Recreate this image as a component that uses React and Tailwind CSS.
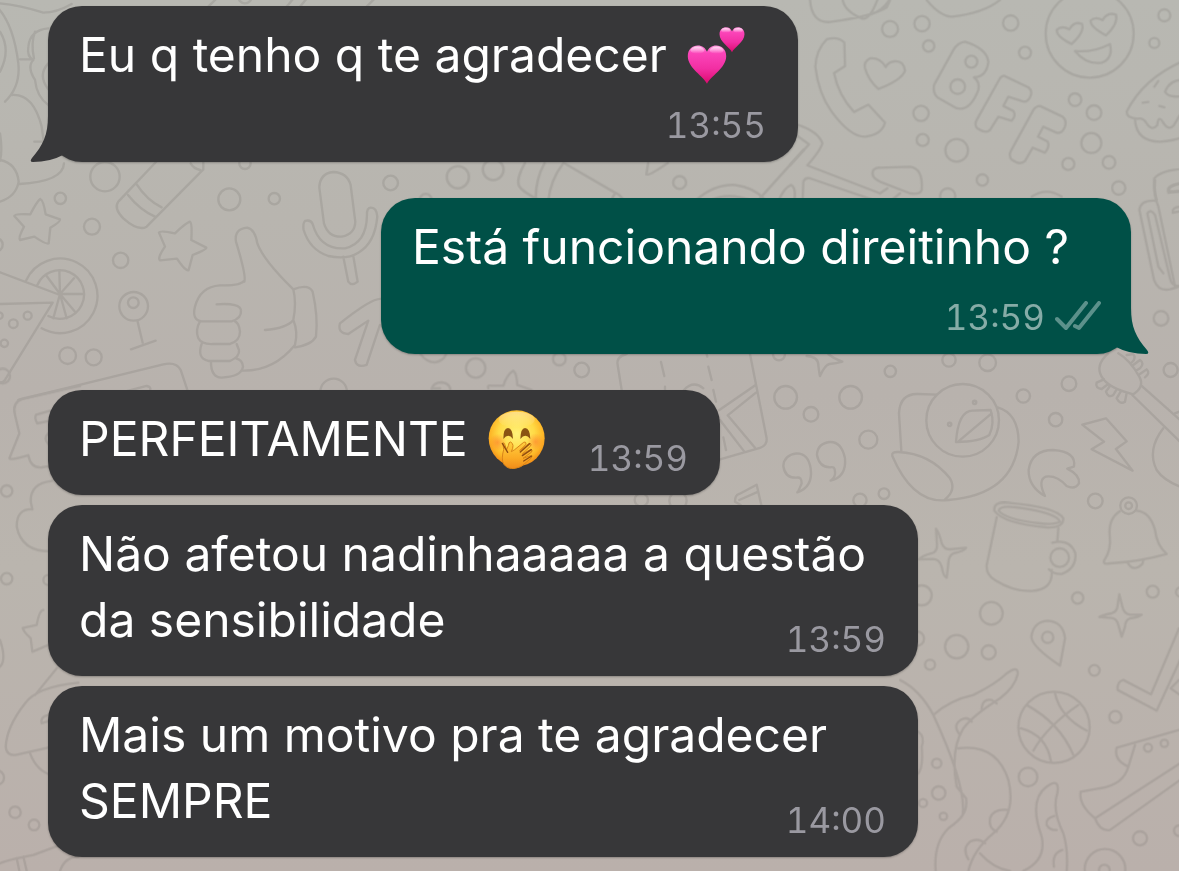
import clsx from 'clsx';

const messages = [
  { id: 1, text: ['Eu q tenho q te agradecer'], emoji: 'hearts', time: '13:55', tail: true, stacked: true, width: 'w-[750px]' },
  { id: 2, text: ['Está funcionando direitinho ?'], time: '13:59', mine: true, tail: true, stacked: true, width: 'w-[750px]' },
  { id: 3, text: ['PERFEITAMENTE'], emoji: 'giggle', time: '13:59', width: 'w-[672px]' },
  { id: 4, text: ['Não afetou nadinhaaaaa a questão', 'da sensibilidade'], time: '13:59', width: 'w-[870px]' },
  { id: 5, text: ['Mais um motivo pra te agradecer', 'SEMPRE'], time: '14:00', width: 'w-[870px]' },
];

// Each wallpaper tile is drawn at about three times its final size.
const tiles = [
  {
    at: 'translate(0 0) scale(0.3333)',
    circles: [[315, 530, 44], [735, -10, 20]],
    paths: [
      'M0 10Q60 15 130 38Q170 38 215 12',
      'M-10 20Q40 70 55 190Q62 260 15 305M0 95Q34 150 0 215',
      'M145 85Q90 90 85 140Q80 170 100 180Q80 200 105 240Q110 290 145 315M105 95Q92 130 102 175M60 178H98M145 190Q112 225 145 268',
      'M35 285Q100 280 125 380L132 430M103 425H130M0 400Q8 450 0 482',
      'M0 480Q50 490 56 545Q48 590 0 605M58 552Q190 545 192 490',
      'M625 20L655-10M860 20L885-10M900 20L925-10M1100 20L1130-10',
    ],
  },
  {
    at: 'translate(790 0) scale(0.3333)',
    circles: [
      [300, 87, 24], [396, 71, 23], [416, 138, 17], [662, 69, 23], [705, 158, 18], [1123, 46, 18], [1093, 129, 15],
      [393, 340, 23], [398, 420, 18], [500, 451, 34], [577, 540, 17], [473, 588, 23], [855, 299, 19], [912, 338, 22],
      [904, 429, 30], [835, 492, 18], [957, 487, 19], [899, 101, 132], [544, 185, 18], [503, 260, 22],
    ],
    paths: [
      'M60 0Q65 70 120 66Q250 48 290 22L300 0M158 0Q165 35 218 56Q240 58 262 0M240 44Q275 35 298 0',
      'M410 0Q450 48 485 50Q580 40 630 0',
      'M163 128Q145 108 110 118Q78 150 76 200Q85 280 125 335Q180 410 225 410Q275 405 285 368L235 314L192 336Q145 285 132 219L165 198Z',
      'M287 201Q270 172 240 175Q220 185 225 205Q235 240 265 267Q335 240 345 212Q340 180 312 184Q295 186 287 201Z',
      'M525 125Q502 128 490 150L432 255Q428 280 442 292L500 325Q540 335 565 270Q570 245 552 232Q590 230 595 185Q590 145 525 125Z',
      'M642 227L715 262Q730 275 720 292Q710 310 695 303L655 290L640 318L670 333Q680 345 665 362L625 350L600 390Q588 402 562 385Q552 375 560 360L628 238Q633 228 642 227Z',
      'M750 318L818 350Q832 362 824 382Q815 402 800 398L760 380L744 410L773 425Q780 440 765 458L728 443L705 483Q690 497 665 479Q655 468 663 452L730 330Q738 318 750 318Z',
      'M845 132Q800 110 800 90Q815 75 838 88Q852 62 876 72Q885 95 845 132ZM948 106Q900 80 902 62Q915 48 938 60Q952 35 978 44Q985 72 948 106Z',
      'M855 153Q910 158 960 132Q970 175 935 188Q890 195 855 153Z',
      'M1180 183Q1060 235 1010 335Q1010 355 1042 356Q1060 352 1070 370Q1085 395 1102 375Q1105 345 1118 365Q1135 395 1152 375L1170 345M1035 360Q1040 425 1110 425Q1150 423 1180 410M1180 240Q1140 238 1125 275Q1135 295 1180 288M1105 243L1093 260M1058 308L1075 306M1108 318L1123 322',
      'M25 375Q85 395 97 430Q92 450 52 496L270 580M0 495L57 433L25 410M38 595L40 545Q45 532 60 535L250 600',
      'M270 503L360 500Q400 505 395 570Q390 585 360 580L270 545Q240 530 250 510Q258 502 270 503ZM270 580L292 565M305 600L330 580',
      'M725 590Q770 560 815 590',
      'M1180 507Q1115 510 1093 535Q1090 570 1100 600M1180 550Q1130 555 1135 570Q1145 580 1180 572',
    ],
  },
  {
    at: 'translate(0 150) scale(0.3333)',
    circles: [
      [181, 145, 17], [276, 230, 24], [362, 331, 23], [688, 148, 33], [823, 146, 17], [203, 617, 25], [281, 622, 24],
      [401, 469, 43], [400, 458, 16], [83, 497, 12], [40, 521, 13], [13, 580, 11], [-2, 497, 10], [735, 40, 17],
      [1001, 726, 40], [1172, 99, 22], [-12, 284, 20],
    ],
    paths: [
      'M121 147Q130 150 137 193L180 208Q182 215 151 233L146 280Q140 285 103 260L60 270Q54 264 72 230L43 198Q44 190 91 193Q110 155 121 147Z',
      'M570 215Q577 220 574 270L619 293Q620 299 578 315L566 360Q558 366 531 326L480 331Q471 325 495 290L477 248Q480 240 525 250Q556 220 570 215Z',
      'M468 36L355 155Q340 175 370 205Q415 245 440 230L610 58V36M408 100Q440 150 485 172M384 135Q420 180 465 200M572 40Q580 55 600 60',
      'M78 392A112 112 0 1 1 125 535M112 405A73 73 0 1 1 145 498M180 432L140 378M180 432L178 362M180 432L222 385M180 432L252 432M180 432L225 485M180 432L200 505M180 432L160 505M0 367L180 435M0 462L158 458L15 690Q8 700 0 697',
      'M413 515L428 578M393 598L467 572',
      'M733 395Q740 380 708 275Q702 237 742 233Q765 238 772 280Q790 330 880 418Q890 460 880 510Q860 535 795 540M880 510Q895 545 885 585Q820 665 725 662M733 392Q722 408 660 406Q600 410 585 470Q575 510 605 514H695Q725 505 723 482Q722 458 650 463',
      'M600 514Q585 540 595 565Q605 584 640 582H690Q720 572 720 545Q718 520 705 514M605 582Q590 625 625 633H690Q720 620 717 600L710 582M633 633Q632 682 665 683Q725 680 729 650Q728 630 708 625',
      'M880 418Q925 400 938 425Q955 500 948 560Q935 585 885 592',
      'M1000 66Q960 70 958 112L972 220Q985 262 1025 260Q1065 252 1066 215L1052 105Q1042 68 1000 66ZM938 222Q932 208 915 213Q908 220 911 240Q930 300 985 318Q1040 330 1075 308Q1125 280 1132 200Q1130 172 1112 173Q1100 175 1101 195Q1100 280 1035 295Q960 300 938 222ZM1030 320L1045 395Q1055 410 1073 395L1060 318',
      'M1145 447Q1120 440 1020 520Q1012 550 1045 552L1105 512L1065 630Q1070 655 1100 645L1140 525',
      'M55 750L490 643Q530 635 542 660L562 720M280 750L440 708Q455 710 450 722',
    ],
  },
  {
    at: 'translate(400 150) scale(0.3571)',
    circles: [[162, 76, 31], [261, 55, 29], [783, 91, 18], [72, 140, 17]],
    paths: [
      'M350 36Q325 80 333 100Q340 115 385 138M405 36Q380 80 380 135M458 36Q420 85 415 145M462 38L600 118Q620 125 628 145M595 145Q592 130 605 120',
      'M695 36L690 68Q695 75 750 36M830 140Q880 95 940 98Q990 105 1018 135M865 143Q920 115 985 143M1008 135L1130 0M1060 143Q1075 105 1095 98Q1110 105 1104 145',
    ],
  },
  {
    at: 'translate(330 345) scale(0.3333)',
    circles: [[437, 69, 29], [688, 42, 19]],
    paths: [
      'M272 28Q290 52 315 52Q340 48 348 28',
      'M305 132Q310 112 335 112Q362 115 362 140M305 130H330',
      'M475 130Q470 120 485 122H520Q530 90 550 77Q560 85 562 120L605 135',
    ],
  },
  {
    at: 'translate(900 180) scale(0.3333)',
    circles: [[656, 24, 20], [783, 415, 22]],
    paths: [
      'M765 62Q722 60 718 90L762 300Q775 335 810 328Q835 320 840 318M840 318Q815 320 810 295L765 105Q752 85 742 100L775 260L790 280M765 0Q760 45 775 80L825 320M840 10Q800 20 805 38L840 32M840 80Q815 82 818 98L840 94',
    ],
  },
  {
    at: 'translate(580 340) scale(0.3333)',
    circles: [
      [617, 172, 34], [812, 172, 34], [693, 223, 22], [865, 299, 27], [931, 94, 17], [597, 43, 18], [840, 481, 20],
      [912, 461, 16], [5, 90, 22], [184, 480, 20], [294, 482, 26],
    ],
    paths: [
      'M140 42Q108 50 113 75L125 150M510 42L560 295Q562 315 540 324L420 358M418 210L527 135M528 158L443 226L525 323M420 240L493 335M243 66L253 108M380 42L382 50M385 80L395 120M400 150L408 185M430 292L438 330M255 140V150M312 150Q340 120 370 145',
      'M680 48Q715 50 715 75Q718 100 720 108Q735 75 748 72Q770 70 787 65Q760 55 745 42',
      'M665 430Q655 455 652 457Q700 440 692 385Q685 340 650 340Q612 345 610 378Q615 415 650 413Q665 410 665 430Z',
      'M765 395Q768 410 752 422Q800 410 795 355Q785 305 750 306Q712 310 711 345Q718 382 750 382Q765 378 765 395Z',
      'M482 495L465 485Q465 465 478 462L530 434L544 495M478 480L535 455',
    ],
  },
  {
    at: 'translate(700 350) scale(0.3333)',
    circles: [
      [747, 30, 20], [863, 38, 25], [970, 138, 20], [1107, 101, 22], [1067, 209, 20], [1186, 453, 22], [1412, 60, 21],
      [788, 211, 109], [749, 223, 5], [824, 157, 5], [1286, 467, 25], [1286, 467, 10],
    ],
    paths: [
      'M710 134L655 132Q600 130 597 190L604 302M893 172Q955 190 956 275Q940 435 745 450Q640 465 577 318Q574 305 595 306Q690 310 750 385Q770 420 735 448',
      'M768 276Q775 180 820 182L872 180Q885 220 868 255Q840 275 768 276ZM778 272L875 190',
      'M1035 438Q985 410 986 360Q995 300 1060 300Q1130 305 1122 350L1102 356Q1140 375 1137 400Q1125 420 1100 408Q1070 375 1038 380Q1012 390 1035 438Z',
      'M1147 224L1218 205L1280 274L1248 297L1298 362L1175 298L1212 275Z',
      'M1225 10Q1185 45 1205 80Q1225 115 1300 133Q1335 110 1318 80Q1290 30 1255 10M1325 108L1440 210M1297 135L1440 275M1212 88L1190 98Q1185 115 1205 117L1225 102M1230 108L1218 125Q1225 145 1240 135L1250 118M1262 125L1250 145Q1260 165 1275 155L1280 130M1280 15L1300 12Q1310 25 1295 38M1300 45L1320 30Q1335 40 1320 55L1308 62M1320 72L1340 58Q1352 70 1335 82',
      'M1390 235Q1340 300 1370 360Q1390 390 1440 410M1425 190L1440 184',
    ],
  },
  {
    at: 'translate(900 480) scale(0.3333)',
    circles: [
      [533, 354, 17], [758, 335, 18], [274, 400, 34], [170, 500, 35], [266, 517, 21], [90, 554, 15],
      [65, 346, 30], [50, 476, 22], [443, 472, 17], [583, 571, 16], [646, 711, 18], [462, 742, 107], [384, 891, 28],
      [479, 233, 28], [110, 850, 14], [116, 939, 20], [69, 969, 12], [130, 1009, 11], [744, 803, 12], [793, 790, 11],
      [720, 1075, 21], [615, 1168, 61], [613, 1170, 16], [838, 1052, 16], [842, 336, 14],
    ],
    paths: [
      'M283 92Q280 65 320 68Q470 80 490 115Q490 145 440 142Q310 130 283 92ZM296 92Q300 75 350 82Q470 98 480 125Q465 135 420 130Q315 118 296 92ZM290 112L260 255Q258 285 285 300Q340 335 395 333Q460 330 455 270M475 145L472 182M457 188Q510 175 526 220Q530 265 485 282Q460 283 447 268',
      'M108 146Q118 160 125 190Q132 208 150 208L198 203Q195 212 160 220Q145 228 145 250L140 293Q130 290 125 260Q118 238 100 237L57 238Q65 228 95 220Q112 215 111 195Z',
      'M658 343L667 380Q672 402 690 404L725 404Q715 412 690 415Q676 420 675 440L665 470L655 435Q650 415 635 414L598 411Q610 405 635 400Q652 395 653 375Z',
      'M660 93Q625 115 629 165Q635 210 612 242Q610 255 630 250Q720 245 800 222Q770 195 765 150Q750 95 710 92M683 248Q700 278 727 252L730 240',
      'M480 557Q395 500 394 470Q400 425 443 422Q490 425 495 475Z',
      'M837 445L753 643L670 600Q650 605 653 630L770 692L840 540M837 600L812 625L840 645',
      'M380 675Q480 730 520 825M465 640Q480 710 560 752M535 675Q440 740 400 812M362 745Q440 765 453 845',
      'M0 600Q60 630 100 705Q200 920 188 1005Q180 1020 145 1045Q100 1090 107 1173M100 705Q150 660 220 645Q290 610 320 580Q355 555 353 582Q345 620 300 655Q220 705 190 745Q150 810 170 920L198 955Q202 985 188 1005M175 805Q290 790 325 900Q350 1000 280 1060Q220 1110 205 1173M240 1120Q280 1165 330 1173M370 1173Q440 1140 425 1070Q385 960 440 920Q480 890 472 940Q455 990 490 1060Q505 1110 500 1173',
      'M245 690Q245 655 275 660L290 670M180 765Q155 735 185 718Q205 710 215 725M325 990Q280 985 270 1015Q265 1045 290 1055M205 1138Q185 1105 210 1085Q235 1072 255 1090M463 1008Q435 1015 440 1035Q450 1052 470 1050M487 1110Q455 1120 462 1160M55 755Q75 770 65 800Q70 860 55 880',
      'M837 750L650 803Q640 840 685 860L705 795M685 860Q670 915 600 925L542 935Q535 975 585 1015L840 850M585 1015Q600 1055 630 1050L840 900',
    ],
  },
  {
    at: 'translate(0 380) scale(0.3333)',
    circles: [[20, 333, 17], [20, 596, 17], [45, 1297, 17], [102, 1335, 16], [145, 600, 15], [-10, 1193, 22], [8, -12, 22]],
    paths: [
      'M240 18L65 57Q35 70 45 105L58 160L28 235Q30 242 85 226Q92 265 125 262L150 258M150 92L108 104Q102 115 112 130L150 122M145 160Q128 175 145 192',
      'M155 303Q90 310 92 365L97 388Q50 385 50 440Q65 515 150 514',
      'M130 690Q118 690 110 735L68 744Q70 755 92 775L97 815L145 795',
      'M170 865L105 945M235 908Q110 920 75 970Q20 1040 17 1100Q20 1130 50 1124L150 1102M90 1120Q110 1175 160 1188M145 1005Q120 1010 125 1030L150 1022M0 780Q20 840 0 860',
      'M0 1450Q20 1440 100 1425L180 1395M50 1435L58 1473M70 1430L80 1473M180 1473Q195 1430 235 1430',
    ],
  },
];

function Wallpaper() {
  return (
    <svg
      className="absolute inset-0 -z-10 h-full w-full"
      viewBox="0 0 1179 871"
      preserveAspectRatio="xMidYMin slice"
      fill="none"
      stroke="#76726e"
      strokeWidth="7"
      strokeLinecap="round"
      strokeLinejoin="round"
      aria-hidden="true"
    >
      <g opacity="0.22">
        {tiles.map((tile) => (
          <g key={tile.at} transform={tile.at}>
            {tile.circles.map(([cx, cy, r]) => (
              <circle key={`${cx},${cy},${r}`} cx={cx} cy={cy} r={r} />
            ))}
            {tile.paths.map((d) => (
              <path key={d} d={d} />
            ))}
          </g>
        ))}
      </g>
    </svg>
  );
}

const heart =
  'M50 97C42 78 2 58 2 28C2 10 14 1 27 1C38 1 46 7 50 17C54 7 62 1 73 1C86 1 98 10 98 28C98 58 58 78 50 97Z';

function HeartsEmoji() {
  return (
    <svg className="ml-[6px] inline-block h-[60px] w-[60px] align-[-13px]" viewBox="0 0 60 60" role="img" aria-label="💕">
      <defs>
        <linearGradient id="heartFill" x1="0" y1="0" x2="0" y2="1">
          <stop offset="0" stopColor="#ff8edb" />
          <stop offset="0.2" stopColor="#fb45b9" />
          <stop offset="0.6" stopColor="#f22fa3" />
          <stop offset="1" stopColor="#dd0a6e" />
        </linearGradient>
        <linearGradient id="heartShine" x1="0" y1="0" x2="0" y2="1">
          <stop offset="0" stopColor="#fff" stopOpacity="0.7" />
          <stop offset="1" stopColor="#fff" stopOpacity="0" />
        </linearGradient>
      </defs>
      <g transform="translate(1 20) scale(0.4)">
        <path d={heart} fill="url(#heartFill)" />
        <ellipse cx="26" cy="13" rx="17" ry="9" fill="url(#heartShine)" />
        <ellipse cx="74" cy="13" rx="17" ry="9" fill="url(#heartShine)" />
      </g>
      <g transform="translate(33 2) scale(0.26)">
        <path d={heart} fill="url(#heartFill)" />
        <ellipse cx="26" cy="13" rx="17" ry="9" fill="url(#heartShine)" />
        <ellipse cx="74" cy="13" rx="17" ry="9" fill="url(#heartShine)" />
      </g>
    </svg>
  );
}

function GiggleEmoji() {
  return (
    <svg className="ml-[6px] inline-block h-[60px] w-[60px] align-[-13px]" viewBox="0 0 180 180" role="img" aria-label="🤭">
      <defs>
        <radialGradient id="face" cx="0.5" cy="0.42" r="0.58">
          <stop offset="0" stopColor="#fff27a" />
          <stop offset="0.55" stopColor="#ffda45" />
          <stop offset="0.82" stopColor="#fdb526" />
          <stop offset="1" stopColor="#f08a17" />
        </radialGradient>
        <radialGradient id="blush">
          <stop offset="0" stopColor="#ff6a2b" stopOpacity="0.5" />
          <stop offset="1" stopColor="#ff6a2b" stopOpacity="0" />
        </radialGradient>
        <linearGradient id="faceShine" x1="0" y1="0" x2="0" y2="1">
          <stop offset="0" stopColor="#fff" stopOpacity="0.4" />
          <stop offset="1" stopColor="#fff" stopOpacity="0" />
        </linearGradient>
        <linearGradient id="hand" x1="0" y1="0" x2="0" y2="1">
          <stop offset="0" stopColor="#ffcf40" />
          <stop offset="0.6" stopColor="#fbab25" />
          <stop offset="1" stopColor="#f08c1a" />
        </linearGradient>
      </defs>
      <circle cx="89" cy="88" r="84" fill="url(#face)" />
      <ellipse cx="89" cy="32" rx="54" ry="24" fill="url(#faceShine)" />
      <circle cx="32" cy="100" r="26" fill="url(#blush)" />
      <circle cx="146" cy="98" r="26" fill="url(#blush)" />
      <path d="M49 90Q49 57 63 57Q77 58 78 90Q64 70 49 90Z" fill="#8a5413" />
      <path d="M100 90Q101 57 114 57Q129 58 130 90Q115 70 100 90Z" fill="#8a5413" />
      <path
        d="M52 103Q46 95 50 122Q42 150 50 165Q62 182 85 178Q105 174 113 164L132 148Q137 143 131 140L108 148L133 130Q139 123 131 121L106 135L130 112Q136 103 126 103L98 125L116 107Q119 97 110 100L83 122L73 128Q84 106 71 99Q65 98 64 110L59 122Z"
        fill="url(#hand)"
        stroke="#d98418"
        strokeWidth="3"
        strokeLinejoin="round"
      />
      <path
        d="M46 103L62 130M133 122L106 140M134 141L110 156M128 104L100 129"
        fill="none"
        stroke="#8f4c10"
        strokeWidth="4"
        strokeLinecap="round"
      />
    </svg>
  );
}

function Tail({ mine }) {
  return (
    <svg
      className={clsx(
        'absolute bottom-0 h-[50px] w-[40px]',
        mine ? '-right-[18px] -scale-x-100 fill-[#005047]' : '-left-[18px] fill-[#373739]',
      )}
      viewBox="0 0 40 50"
      aria-hidden="true"
    >
      <path d="M18 4C18 23 13 33 2 46Q-1 50 3 50Q20 50 33 43L40 38V4Z" />
    </svg>
  );
}

function Ticks() {
  return (
    <svg
      className="h-8 w-[46px]"
      viewBox="0 0 46 32"
      fill="none"
      stroke="#5c918b"
      strokeWidth="4"
      strokeLinecap="round"
      strokeLinejoin="round"
      role="img"
      aria-label="Entregue"
    >
      <path d="M2 18L11 27L31 2" />
      <path d="M20 25L24 27L44 2" />
    </svg>
  );
}

function Message({ message }) {
  const { text, emoji, time, mine, tail, stacked, width } = message;

  return (
    <li
      className={clsx(
        'relative max-w-full rounded-[34px] pt-4 pb-[15px] pl-[31px] shadow-[0_1px_2px_rgba(0,0,0,0.25)]',
        width,
        mine ? 'self-end bg-[#005047] pr-[30px]' : 'self-start bg-[#373739] pr-8',
      )}
    >
      {tail && <Tail mine={mine} />}
      <div className="relative flow-root text-[48px] leading-[66px] text-white">
        {text.map((part) => (
          <span key={part}>{part} </span>
        ))}
        {emoji === 'hearts' && <HeartsEmoji />}
        {emoji === 'giggle' && <GiggleEmoji />}
        <div
          className={clsx(
            'float-right flex items-center gap-[10px] text-[35px] leading-[44px] tabular-nums',
            mine ? 'text-[#86aca7]' : 'text-[#9a99a1]',
            stacked ? 'mt-[15px]' : 'mt-[30px]',
          )}
        >
          <time>{time}</time>
          {mine && <Ticks />}
        </div>
      </div>
    </li>
  );
}

export default function App() {
  return (
    <main className="relative isolate min-h-screen overflow-hidden bg-[linear-gradient(to_bottom,#b8b8b2,#b8b5af_25%,#b8b2ad_45%,#bab5ae_65%,#bab0ab)] px-12 pt-[6px] pb-3 font-['Inter',sans-serif]">
      <Wallpaper />
      <ul className="flex flex-col gap-9">
        {messages.slice(0, 2).map((message) => (
          <Message key={message.id} message={message} />
        ))}
        <li>
          <ul className="flex flex-col gap-[10px]">
            {messages.slice(2).map((message) => (
              <Message key={message.id} message={message} />
            ))}
          </ul>
        </li>
      </ul>
    </main>
  );
}
